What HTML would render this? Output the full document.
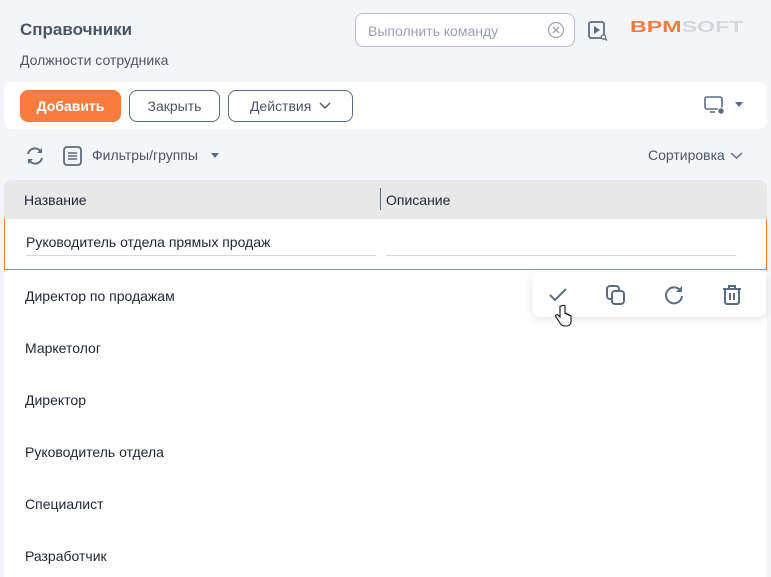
<!DOCTYPE html>
<html><head><meta charset="utf-8"><style>
*{box-sizing:border-box;margin:0;padding:0}
body{width:771px;height:577px;overflow:hidden;background:#f4f5f9;font-family:"Liberation Sans","Noto Sans CJK SC",sans-serif;color:#1f2633;position:relative}
.abs{position:absolute}
.title{left:20px;top:20px;font-size:17px;font-weight:bold;color:#4a5568}
.sub{left:20px;top:52px;font-size:14px;color:#4a5568}
.search{left:355px;top:13px;width:220px;height:34px;border:1px solid #b9bec8;border-radius:8px;background:#fff;font-size:14px;color:#9aa0aa;padding:9px 12px}
.tb{left:4px;top:82px;width:763px;height:47px;background:#fff;border-radius:8px}
.btn{top:90px;height:32px;border-radius:8px;font-size:14px;display:flex;align-items:center;justify-content:center}
.ghost{border:1px solid #5c6a82;color:#4a5568;background:#fff}
.hdr{left:4px;top:180px;width:763px;height:40px;background:#e8e8e8;border-radius:8px 8px 0 0;font-size:14px}
.rows{left:4px;top:220px;width:763px;height:357px;background:#fff}
.row{position:absolute;left:25px;font-size:14px;color:#1f2633}
.sel{left:4px;top:219px;width:763px;height:51px;border:1px solid #f07c42;border-top:none;background:#fff}
.pop{left:532px;top:272px;width:234px;height:45px;background:#fff;border-radius:8px;box-shadow:0 2px 8px rgba(0,0,0,.12)}
</style></head><body>
<div class="abs title">Справочники</div>
<div class="abs sub">Должности сотрудника</div>
<div class="abs search">Выполнить команду</div>
<svg class="abs" style="left:547px;top:21px" width="18" height="18"><circle cx="9" cy="9" r="7.5" fill="none" stroke="#a0a5ae" stroke-width="1.3"/><path d="M6 6l6 6M12 6l-6 6" stroke="#a0a5ae" stroke-width="1.3"/></svg>
<svg class="abs" style="left:587px;top:20px" width="22" height="22"><rect x="2" y="2" width="15" height="16" rx="2" fill="none" stroke="#5c6a82" stroke-width="1.8"/><path d="M7 6v8l6-4z" fill="#5c6a82"/><circle cx="16.5" cy="17" r="2.2" fill="#fff" stroke="#5c6a82" stroke-width="1.3"/><path d="M18 18.5l2 2" stroke="#5c6a82" stroke-width="1.3"/></svg>
<div class="abs" style="left:630px;top:19px;font-size:16px;font-weight:bold;letter-spacing:0px;transform:scaleX(1.45);transform-origin:left"><span style="color:#f07c42">BPM</span><span style="color:#d5d7dc">SOFT</span></div>
<div class="abs tb"></div>
<div class="abs btn" style="left:20px;width:101px;background:#f87c3e;color:#fff;font-weight:bold">Добавить</div>
<div class="abs btn ghost" style="left:129px;width:91px">Закрыть</div>
<div class="abs btn ghost" style="left:228px;width:125px">Действия&nbsp;&nbsp;<svg width="12" height="8"><path d="M1 1l5 5 5-5" fill="none" stroke="#4a5568" stroke-width="1.4"/></svg></div>
<svg class="abs" style="left:704px;top:96px" width="24" height="20"><rect x="1" y="1" width="17" height="12" rx="2" fill="none" stroke="#5c6a82" stroke-width="1.6"/><path d="M6 16h5" stroke="#5c6a82" stroke-width="1.6"/><circle cx="17" cy="15" r="3.2" fill="#5c6a82" stroke="#fff" stroke-width="1"/></svg>
<svg class="abs" style="left:735px;top:102px" width="9" height="6"><path d="M0 0h8l-4 5z" fill="#5c6a82"/></svg>
<svg class="abs" style="left:24px;top:145px" width="22" height="22"><path d="M4 9a7 7 0 0 1 13-2M18 13a7 7 0 0 1-13 2" fill="none" stroke="#5c6a82" stroke-width="2"/><path d="M18 3v5h-5zM4 19v-5h5z" fill="#5c6a82"/></svg>
<svg class="abs" style="left:62px;top:145px" width="22" height="22"><rect x="2" y="2" width="17" height="18" rx="3" fill="none" stroke="#5c6a82" stroke-width="1.8"/><path d="M6 8h9M6 11h9M6 14h9" stroke="#5c6a82" stroke-width="1.6"/></svg>
<div class="abs" style="left:92px;top:147px;font-size:14px;color:#4a5568">Фильтры/группы</div>
<svg class="abs" style="left:211px;top:153px" width="9" height="6"><path d="M0 0h8l-4 5z" fill="#5c6a82"/></svg>
<div class="abs" style="left:648px;top:147px;font-size:14px;color:#4a5568">Сортировка</div>
<svg class="abs" style="left:730px;top:152px" width="13" height="8"><path d="M1 1l5.5 5 5.5-5" fill="none" stroke="#5c6a82" stroke-width="1.4"/></svg>
<div class="abs hdr"><span class="abs" style="left:20px;top:12px">Название</span><span class="abs" style="left:376px;top:8px;width:1px;height:22px;background:#5c6a82"></span><span class="abs" style="left:382px;top:12px">Описание</span></div>
<div class="abs rows"></div>
<div class="abs sel"><span class="abs" style="left:21px;top:15px;font-size:14px">Руководитель отдела прямых продаж</span><span class="abs" style="left:21px;top:36px;width:350px;height:1px;background:#d5d8de"></span><span class="abs" style="left:381px;top:36px;width:350px;height:1px;background:#d5d8de"></span></div>
<div class="row" style="top:288px">Директор по продажам</div>
<div class="row" style="top:340px">Маркетолог</div>
<div class="row" style="top:392px">Директор</div>
<div class="row" style="top:444px">Руководитель отдела</div>
<div class="row" style="top:496px">Специалист</div>
<div class="row" style="top:548px">Разработчик</div>
<div class="abs pop"></div>
<svg class="abs" style="left:548px;top:285px" width="20" height="20"><path d="M2 10l5 5 11-11" fill="none" stroke="#5c6a82" stroke-width="2"/></svg>
<svg class="abs" style="left:605px;top:284px" width="22" height="22"><rect x="2" y="2" width="12" height="13" rx="3" fill="none" stroke="#5c6a82" stroke-width="2"/><rect x="7" y="7" width="12" height="13" rx="3" fill="#fff" stroke="#5c6a82" stroke-width="2"/></svg>
<svg class="abs" style="left:663px;top:284px" width="22" height="22"><path d="M17 6A8 8 0 1 0 19 12" fill="none" stroke="#5c6a82" stroke-width="2"/><path d="M19 2v6h-6z" fill="#5c6a82"/></svg>
<svg class="abs" style="left:721px;top:284px" width="22" height="22"><path d="M2 5h18M8 5V2h6v3" fill="none" stroke="#5c6a82" stroke-width="2"/><rect x="4" y="5" width="14" height="15" rx="2" fill="none" stroke="#5c6a82" stroke-width="2"/><path d="M9 9v7M13 9v7" stroke="#5c6a82" stroke-width="2"/></svg>
<svg class="abs" style="left:554px;top:304px" width="18" height="24"><path d="M6 2v11l-2-2c-2-1-3 1-2 2l4 6c1 2 3 3 5 3h2c2 0 4-2 4-4v-6c0-1-2-1-2 0v-1c0-1-2-1-2 0v-1c0-1-2-1-2 0v-1V2c0-1-3-1-3 0z" fill="#fff" stroke="#111" stroke-width="1.1"/></svg>
</body></html>
